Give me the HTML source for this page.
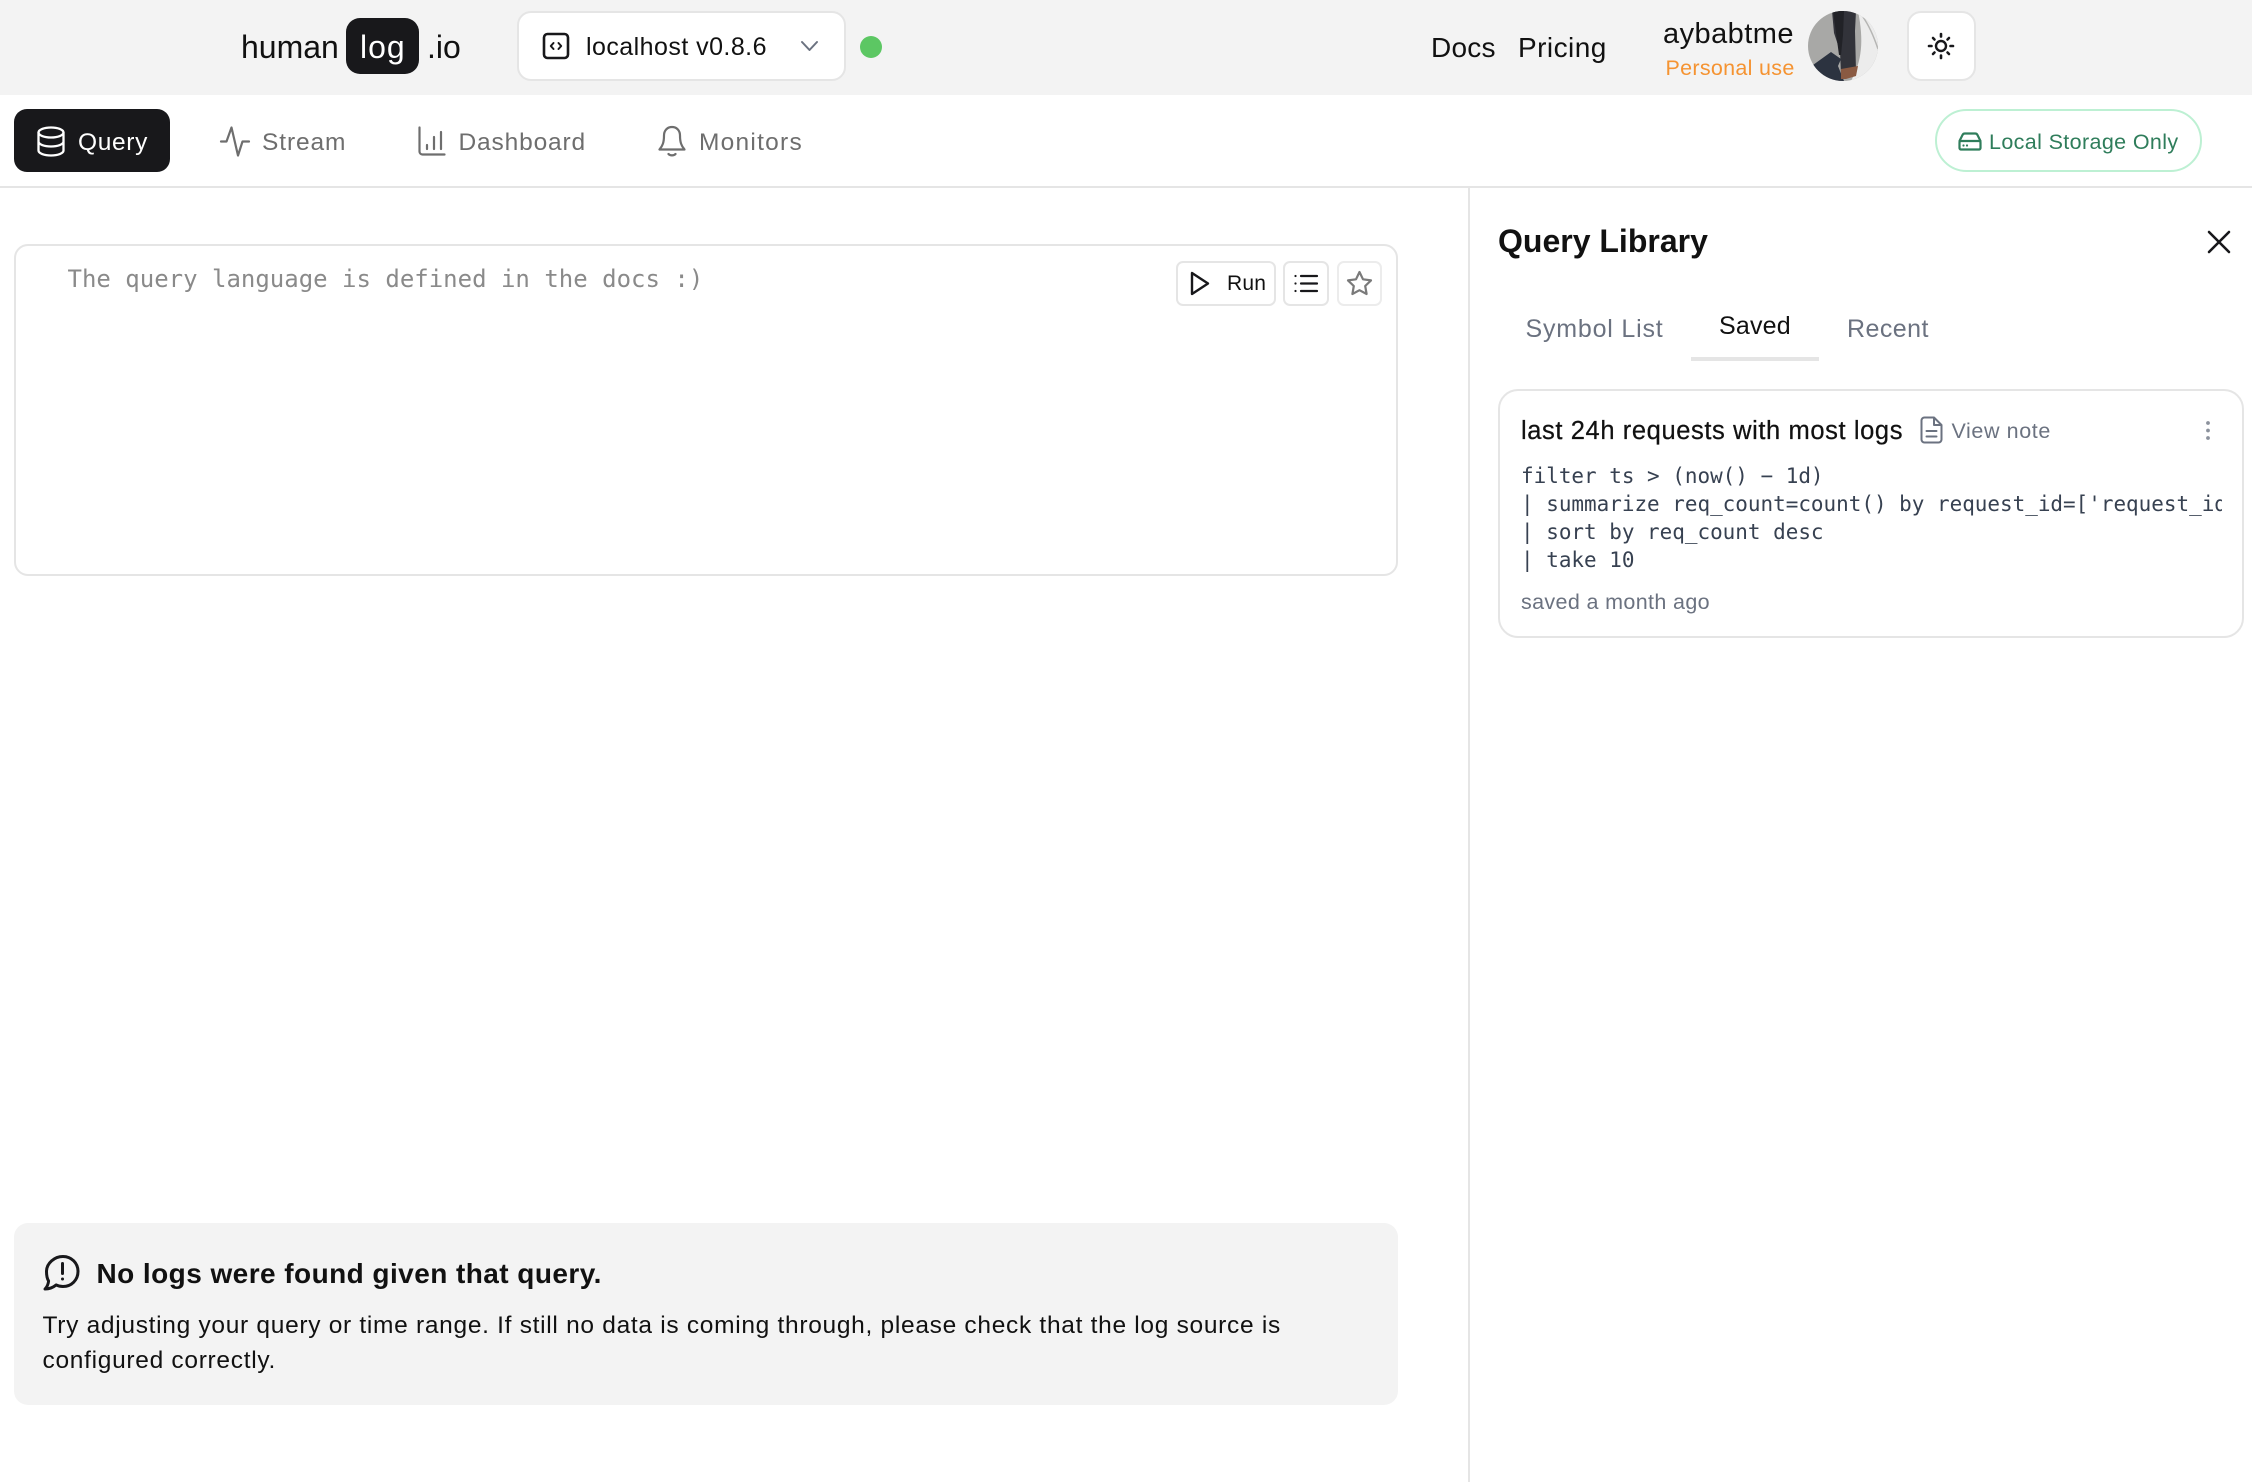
<!DOCTYPE html>
<html lang="en"><head><meta charset="utf-8"><title>humanlog.io</title>
<style>
html,body{margin:0;padding:0;background:#fff}
#p{position:relative;width:2252px;height:1482px;overflow:hidden;background:#fff;font-family:"Liberation Sans",sans-serif;color:#111}
.t{position:absolute;white-space:nowrap;line-height:40px}
.b{position:absolute;box-sizing:border-box}
svg{position:absolute;overflow:visible}
.m{font-family:"DejaVu Sans Mono","Liberation Mono",monospace}
.nav{font-size:24.5px;color:#6e6e6e;top:123px}
.code{left:1521px;font-size:20.95px;color:#374151;line-height:40px;width:701px;overflow:hidden}
.ico{fill:none;stroke-linecap:round;stroke-linejoin:round}
</style></head><body><div id="p">

<div class="b" style="left:0;top:0;width:2252px;height:95px;background:#f3f3f3"></div>
<div class="t" style="left:241px;top:27px;font-size:32px">human</div>
<div class="b" style="left:346px;top:18px;width:73px;height:56px;background:#18181b;border-radius:14px"></div>
<div class="t" style="left:360px;top:27px;font-size:32px;letter-spacing:1px;color:#fff">log</div>
<div class="t" style="left:427px;top:27px;font-size:32px">.io</div>

<div class="b" style="left:517px;top:11px;width:329px;height:70px;background:#fff;border:2.5px solid #e5e5e5;border-radius:14px"></div>
<svg class="ico" style="left:541px;top:31px" width="30" height="30" viewBox="0 0 30 30" stroke="#18181b" stroke-width="2.6"><rect x="3" y="3" width="24" height="24" rx="3.5"/><path d="M12.5 12 9.8 15l2.7 3M17.500 12l2.700 3-2.700 3" stroke-width="2"/></svg>
<div class="t" style="left:586px;top:26.5px;font-size:25px;letter-spacing:.45px">localhost v0.8.6</div>
<svg class="ico" style="left:800px;top:40px" width="19" height="12" viewBox="0 0 19 12" stroke="#6b7280" stroke-width="2"><path d="M2 2l7.500 8L17 2"/></svg>
<div class="b" style="left:860px;top:36px;width:22px;height:22px;border-radius:50%;background:#5cc763"></div>

<div class="t" style="left:1431px;top:27.500px;font-size:28px;letter-spacing:.25px">Docs</div>
<div class="t" style="left:1518px;top:27.500px;font-size:28px;letter-spacing:.45px">Pricing</div>
<div class="t" style="left:1663px;top:13.500px;font-size:29px;letter-spacing:.45px">aybabtme</div>
<div class="t" style="left:1665.500px;top:47.500px;font-size:21.500px;letter-spacing:.3px;color:#f59331">Personal use</div>

<svg style="left:1808px;top:11px" width="70" height="70" viewBox="0 0 70 70">
<defs><clipPath id="av"><circle cx="35" cy="35" r="35"/></clipPath></defs>
<g clip-path="url(#av)">
<rect width="70" height="70" fill="#a8a8a6"/>
<path d="M50 0C56 30 54 50 43 70H70V0z" fill="#ececec"/>
<path d="M55 6C62 16 66 26 70 38" stroke="#b5b5b3" stroke-width="1.500" fill="none"/>
<path d="M24 0H48L47 20 48 60 33 63 32 40 26 22z" fill="#32333a"/>
<path d="M25 0h11l-1 24-2 20h-2l-3-22z" fill="#212227"/>
<path d="M23 41 5 54 16 70H36L30 55 33 48z" fill="#2c3340"/>
<path d="M33 58 50 55 48 65 38 68 33 68z" fill="#8a5a42"/>
</g></svg>

<div class="b" style="left:1906.500px;top:11px;width:69px;height:70px;background:#fff;border:2.5px solid #e5e5e5;border-radius:14px"></div>
<svg class="ico" style="left:1927px;top:32px" width="28" height="28" viewBox="0 0 28 28" stroke="#18181b" stroke-width="2.600"><circle cx="14" cy="14" r="5" stroke-width="2.400"/><path d="M14 2v2.500M14 23.500V26M2 14h2.500M23.500 14H26M6 6l1.500 1.500M20.500 20.500 22 22M6 22l1.500-1.500M20.500 7.500 22 6"/></svg>

<!-- nav -->
<div class="b" style="left:14px;top:109px;width:156px;height:63px;background:#18181b;border-radius:13px"></div>
<svg class="ico" style="left:36px;top:126px" width="30" height="31" viewBox="0 0 30 31" stroke="#fff" stroke-width="2.300"><ellipse cx="15" cy="6.500" rx="12.500" ry="5"/><path d="M2.500 6.500v18c0 2.800 5.600 5 12.500 5s12.500-2.200 12.500-5v-18M2.500 15.500c0 2.800 5.600 5 12.500 5s12.500-2.200 12.500-5"/></svg>
<div class="t" style="left:78px;top:123px;font-size:24.500px;letter-spacing:.65px;color:#fff">Query</div>

<svg class="ico" style="left:220px;top:126px" width="30" height="31" viewBox="0 0 30 31" stroke="#6e6e6e" stroke-width="2.200"><path d="M1 15.500h5.500L11.500 1.500 18 29.500 22.500 15.500H29"/></svg>
<div class="t nav" style="left:262px;letter-spacing:.9px">Stream</div>

<svg class="ico" style="left:418px;top:126px" width="28" height="30" viewBox="0 0 28 30" stroke="#6e6e6e" stroke-width="2.200"><path d="M1.500 1.500v24a3 3 0 0 0 3 3h22M9 19v4M16 11v12M23 6v17"/></svg>
<div class="t nav" style="left:458.500px;letter-spacing:.85px">Dashboard</div>

<svg class="ico" style="left:658px;top:125px" width="28" height="32" viewBox="0 0 28 32" stroke="#6e6e6e" stroke-width="2.200"><path d="M14 2c-5 0-8 3.800-8 8.500 0 7-1.500 10.500-4.500 14h25c-3-3.500-4.500-7-4.500-14C22 5.800 19 2 14 2zM10.500 29c1.500 1.800 5.500 1.800 7 0"/></svg>
<div class="t nav" style="left:699px;letter-spacing:1.250px">Monitors</div>

<div class="b" style="left:1935px;top:109px;width:267px;height:63px;border:2.200px solid #bdf0d3;border-radius:32px;background:#fff"></div>
<svg class="ico" style="left:1958px;top:132px" width="24" height="19" viewBox="0 0 24 19" stroke="#2f7d5b" stroke-width="2.200"><path d="M1.500 9 4.500 3c.4-.9 1.200-1.500 2.300-1.500h10.400c1.100 0 1.900.6 2.300 1.500L22.500 9"/><rect x="1.500" y="9" width="21" height="8.500" rx="1.500"/><path d="M5.500 13.500h.01M9 13.500h.01"/></svg>
<div class="t" style="left:1989px;top:121.500px;font-size:21.500px;letter-spacing:.37px;color:#2f7d5b">Local Storage Only</div>

<div class="b" style="left:0;top:186px;width:2252px;height:2px;background:#e5e5e5"></div>
<div class="b" style="left:1468px;top:188px;width:2px;height:1294px;background:#e5e5e5"></div>

<!-- editor -->
<div class="b" style="left:14px;top:244px;width:1384px;height:332px;border:2.500px solid #e5e5e5;border-radius:14px;background:#fff"></div>
<div class="t m" style="left:67.500px;top:259px;font-size:24px;color:#8a8a8a">The query language is defined in the docs :)</div>
<div class="b" style="left:1176px;top:261px;width:100px;height:45px;border:2.500px solid #e5e5e5;border-radius:7px;background:#fff"></div>
<svg class="ico" style="left:1190px;top:271px" width="20" height="25" viewBox="0 0 20 25" stroke="#18181b" stroke-width="2.400"><path d="M2 2v21l16-10.500z"/></svg>
<div class="t" style="left:1227px;top:264px;font-size:21px;letter-spacing:.2px">Run</div>
<div class="b" style="left:1283px;top:261px;width:46px;height:45px;border:2.500px solid #e5e5e5;border-radius:7px;background:#fff"></div>
<svg class="ico" style="left:1294px;top:274px" width="24" height="19" viewBox="0 0 24 19" stroke="#18181b" stroke-width="2.200"><path d="M7 2h16M7 9.500h16M7 17h16M1.500 2h.01M1.500 9.500h.01M1.500 17h.01"/></svg>
<div class="b" style="left:1337px;top:261px;width:45px;height:45px;border:2.500px solid #ececec;border-radius:7px;background:#fff"></div>
<svg class="ico" style="left:1346px;top:270px" width="27" height="27" viewBox="0 0 27 27" stroke="#7a7a7a" stroke-width="2.200"><path d="M13.500 2l3.500 7.300 8 1.100-5.800 5.600 1.400 8-7.100-3.800L6.400 24l1.400-8L2 10.400l8-1.100z"/></svg>

<!-- alert -->
<div class="b" style="left:14px;top:1223px;width:1384px;height:182px;background:#f3f3f3;border-radius:14px"></div>
<svg class="ico" style="left:43px;top:1254px" width="37" height="37" viewBox="0 0 37 37" stroke="#18181b" stroke-width="3"><path d="M20 2.500c8.500 0 15 6.600 15 15s-6.500 15-15 15c-2.500 0-4.700-.5-6.800-1.600C10 33.500 6.500 35 2 35c2-2 3.200-4.500 3.600-8C4 24.500 3.500 21 3.500 17.500c0-8.400 8-15 16.500-15z"/><path d="M19.500 9.500v10M19.500 25h.01"/></svg>
<div class="t" style="left:96.500px;top:1253.500px;font-size:28px;font-weight:700;letter-spacing:.44px">No logs were found given that query.</div>
<div class="t" style="left:42.500px;top:1305.700px;font-size:24.500px;letter-spacing:.7px">Try adjusting your query or time range. If still no data is coming through, please check that the log source is</div>
<div class="t" style="left:42.500px;top:1340.500px;font-size:24.500px;letter-spacing:.7px">configured correctly.</div>

<!-- side panel -->
<div class="t" style="left:1498px;top:221px;font-size:32px;font-weight:700">Query Library</div>
<svg class="ico" style="left:2207px;top:230px" width="24" height="24" viewBox="0 0 24 24" stroke="#18181b" stroke-width="2.600"><path d="M2 2l20 20M22 2 2 22"/></svg>
<div class="t" style="left:1525.500px;top:309px;font-size:25px;letter-spacing:.8px;color:#6b7280">Symbol List</div>
<div class="t" style="left:1719px;top:306px;font-size:25px;letter-spacing:.2px">Saved</div>
<div class="b" style="left:1691px;top:357px;width:128px;height:4px;background:#e5e5e5"></div>
<div class="t" style="left:1847px;top:309px;font-size:25px;letter-spacing:.45px;color:#6b7280">Recent</div>

<div class="b" style="left:1498px;top:389px;width:746px;height:249px;border:2.500px solid #e5e5e5;border-radius:20px;background:#fff"></div>
<div class="t" style="left:1521px;top:411px;font-size:25.500px;letter-spacing:.6px;-webkit-text-stroke:.25px #111">last 24h requests with most logs</div>
<svg class="ico" style="left:1920px;top:416px" width="23" height="28" viewBox="0 0 23 28" stroke="#6b7280" stroke-width="2"><path d="M14 1.500H4.500a3 3 0 0 0-3 3v19a3 3 0 0 0 3 3h14a3 3 0 0 0 3-3V9zM14 1.500V9h7.500M6.500 15h10M6.500 20.500h10"/></svg>
<div class="t" style="left:1951.500px;top:411.300px;font-size:21.500px;letter-spacing:.6px;color:#6b7280">View note</div>
<svg style="left:2205px;top:420px" width="6" height="21" viewBox="0 0 6 21" fill="#8b919c"><circle cx="3" cy="3" r="1.900"/><circle cx="3" cy="10.500" r="1.900"/><circle cx="3" cy="18" r="1.900"/></svg>
<div class="t m code" style="top:456px">filter ts &gt; (now() − 1d)</div>
<div class="t m code" style="top:484px">| summarize req_count=count() by request_id=['request_id']</div>
<div class="t m code" style="top:512px">| sort by req_count desc</div>
<div class="t m code" style="top:540px">| take 10</div>
<div class="t" style="left:1521px;top:582px;font-size:21.500px;letter-spacing:.36px;color:#6b7280">saved a month ago</div>

</div></body></html>
